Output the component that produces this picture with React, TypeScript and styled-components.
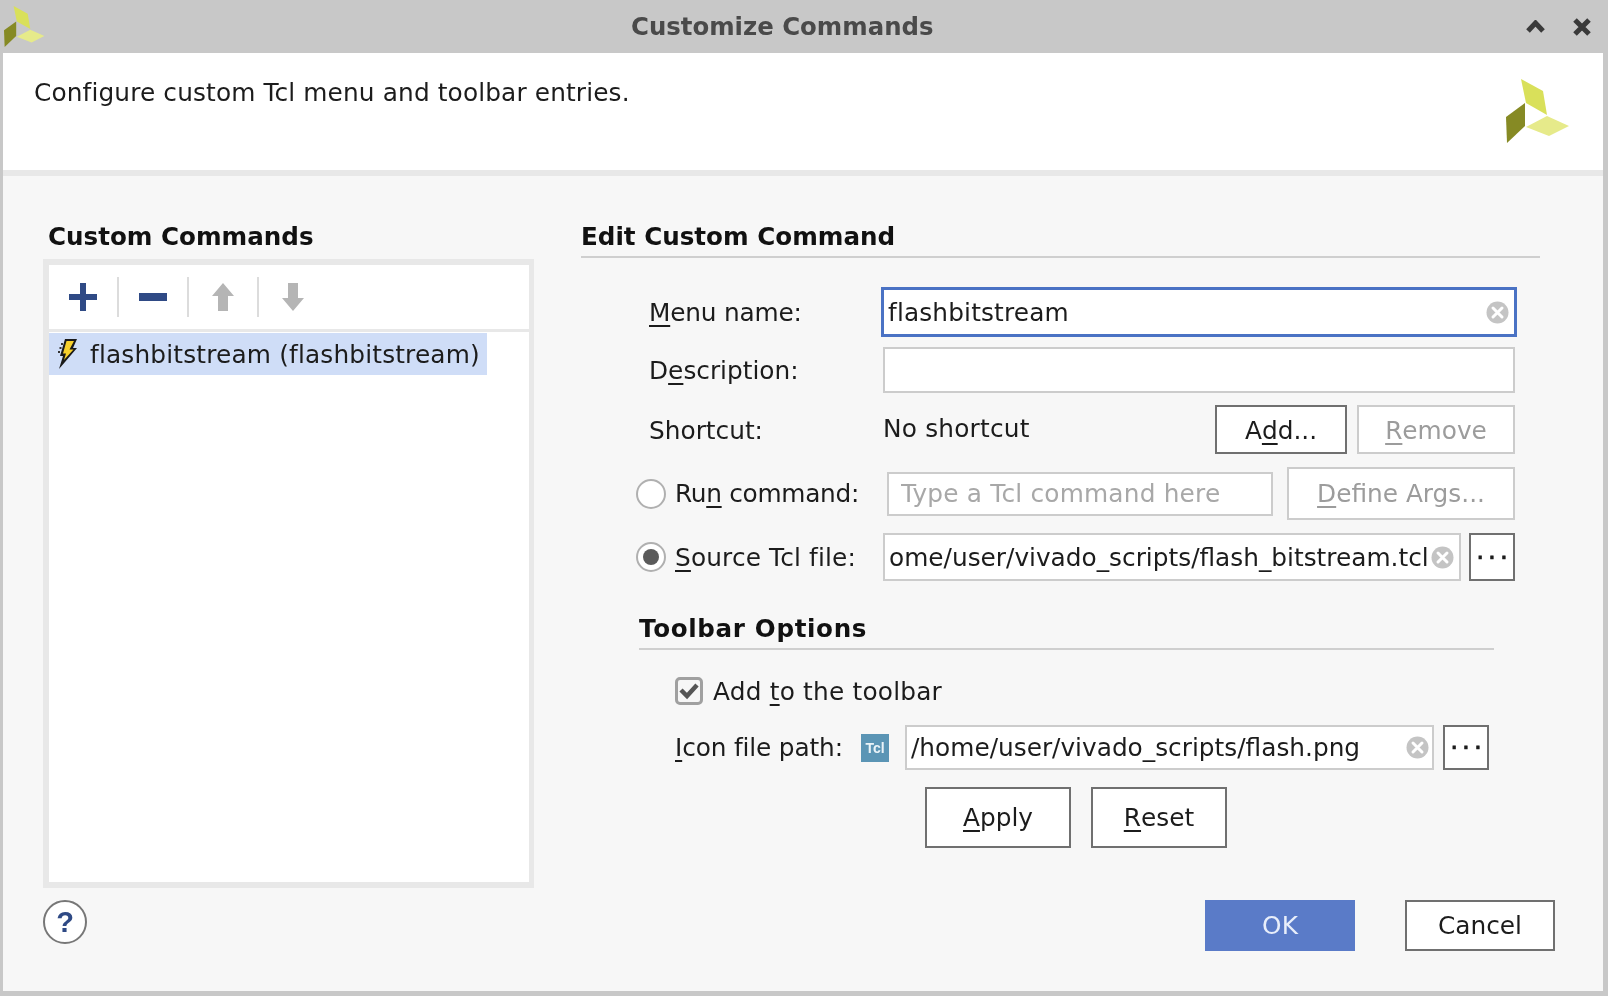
import styled, { createGlobalStyle } from "styled-components";

const GlobalStyle = createGlobalStyle`
  html, body {
    margin: 0;
    padding: 0;
    background: #c8c8c8;
  }
  * {
    box-sizing: border-box;
  }
`;

const Window = styled.div`
  width: 1608px;
  height: 996px;
  display: flex;
  flex-direction: column;
  background: #c8c8c8;
  color: #1c1c1c;
  font-family: "DejaVu Sans", sans-serif;
  font-size: 24.8px;
  overflow: hidden;
  filter: blur(0.45px);
`;

const TitleBar = styled.div`
  height: 53px;
  flex: none;
  display: flex;
  align-items: center;
  padding: 0 17px 0 4px;
`;

const TitleText = styled.div`
  margin-left: 586px;
  flex: 1;
  font-weight: bold;
  font-size: 24.4px;
  color: #4a4a4a;
`;

const TitleButtons = styled.div`
  display: flex;
  align-items: center;
  gap: 28px;
`;

const Content = styled.div`
  flex: 1;
  display: flex;
  flex-direction: column;
  margin: 0 5px 5px 3px;
  background: #f7f7f7;
`;

const Banner = styled.div`
  height: 123px;
  flex: none;
  display: flex;
  justify-content: space-between;
  background: #fff;
  border-bottom: 6px solid #e8e8e8;
  padding: 25px 33px 0 31px;
  letter-spacing: 0.13px;
`;

const BannerLogo = styled.div`
  margin-top: 1px;
`;

const Main = styled.div`
  height: 712px;
  flex: none;
  display: flex;
  gap: 47px;
  padding: 46px 0 0 40px;
`;

const LeftColumn = styled.div`
  width: 491px;
  display: flex;
  flex-direction: column;
`;

const RightColumn = styled.div`
  width: 959px;
  display: flex;
  flex-direction: column;
`;

const SectionTitle = styled.div<{ $track?: number }>`
  height: 28px;
  line-height: 30px;
  font-weight: bold;
  font-size: 24.6px;
  letter-spacing: ${(p) => p.$track ?? 0}px;
  color: #111;
  white-space: nowrap;
`;

const LeftTitle = styled(SectionTitle)`
  padding-left: 5px;
`;

const RuledTitle = styled.div`
  height: 36px;
  border-bottom: 2px solid #cfcfcf;
`;

const SubTitle = styled(RuledTitle)`
  width: 855px;
  margin: 33px 0 0 3px;
`;

const ListBox = styled.div`
  height: 629px;
  margin-top: 9px;
  background: #fff;
  border: 6px solid #e8e8e8;
  border-right-width: 5px;
`;

const ToolBar = styled.div`
  height: 67px;
  display: flex;
  align-items: center;
  border-bottom: 3px solid #e8e8e8;
  padding-bottom: 1px;
`;

const ToolCell = styled.div<{ $last?: boolean }>`
  width: ${(p) => (p.$last ? 67 : 70)}px;
  height: 40px;
  display: flex;
  align-items: center;
  justify-content: center;
  border-right: ${(p) => (p.$last ? "none" : "2px solid #dcdcdc")};
`;

const ListItem = styled.div`
  width: 438px;
  height: 42px;
  margin-top: 1px;
  display: flex;
  align-items: center;
  gap: 13px;
  padding-left: 9px;
  background: #cfddf7;
  white-space: nowrap;
  letter-spacing: 0.17px;
`;

const Form = styled.div`
  width: 879px;
  margin-left: 55px;
  display: flex;
  flex-direction: column;
`;

const Row = styled.div<{ $height: number; $top: number }>`
  height: ${(p) => p.$height}px;
  margin-top: ${(p) => p.$top}px;
  display: flex;
  align-items: center;
  white-space: nowrap;
`;

const Label = styled.div<{ $width: number; $track?: number }>`
  width: ${(p) => p.$width}px;
  flex: none;
  padding-left: 13px;
  letter-spacing: ${(p) => p.$track ?? 0}px;
`;

const ShortcutLabel = styled(Label)`
  padding-top: 1px;
`;

const RadioLabel = styled.div<{ $width: number; $track?: number }>`
  width: ${(p) => p.$width}px;
  flex: none;
  margin-left: 9px;
  letter-spacing: ${(p) => p.$track ?? 0}px;
`;

const Mnemonic = styled.span`
  text-decoration: underline;
  text-decoration-thickness: 2px;
  text-underline-offset: 4px;
`;

const Field = styled.div<{ $width?: number; $focused?: boolean; $height?: number }>`
  height: ${(p) => (p.$height ? `${p.$height}px` : "100%")};
  flex: ${(p) => (p.$width ? "none" : "1")};
  width: ${(p) => (p.$width ? `${p.$width}px` : "auto")};
  min-width: 0;
  display: flex;
  align-items: center;
  background: #fff;
  border: ${(p) => (p.$focused ? "3.5px solid #4a72c4" : "2px solid #cccccc")};
  margin: ${(p) => (p.$focused ? "0 -2px" : "0")};
`;

const TextInput = styled.input<{ $pad?: number; $track?: number }>`
  flex: 1;
  min-width: 0;
  height: 100%;
  border: none;
  outline: none;
  background: transparent;
  padding: 0 0 0 ${(p) => p.$pad ?? 4}px;
  font: inherit;
  letter-spacing: ${(p) => p.$track ?? 0}px;
  color: #1c1c1c;

  &::placeholder {
    color: #a8a8a8;
    opacity: 1;
  }
`;

const ClearSlot = styled.div<{ $right: number }>`
  flex: none;
  display: flex;
  margin: 0 ${(p) => p.$right}px 0 4px;
`;

const NoShortcut = styled.div`
  flex: 1;
  margin-top: -3px;
  letter-spacing: 0.2px;
`;

const PushButton = styled.div<{ $width: number; $disabled?: boolean; $left?: number }>`
  width: ${(p) => p.$width}px;
  height: 100%;
  flex: none;
  margin-left: ${(p) => p.$left ?? 0}px;
  display: flex;
  align-items: center;
  justify-content: center;
  background: #fff;
  border: 2px solid ${(p) => (p.$disabled ? "#cccccc" : "#707070")};
  color: ${(p) => (p.$disabled ? "#9c9c9c" : "#1c1c1c")};
`;

const ShortcutButton = styled(PushButton)`
  padding-top: 1px;
`;

const DotsButton = styled(PushButton)`
  letter-spacing: 4px;
  padding-left: 4px;
  -webkit-text-stroke: 0.7px #1c1c1c;
`;

const Radio = styled.div<{ $checked?: boolean }>`
  width: 30px;
  height: 30px;
  flex: none;
  display: flex;
  align-items: center;
  justify-content: center;
  border-radius: 50%;
  background: #fff;
  border: 2.5px solid #b0b0b0;

  &::after {
    content: "";
    display: ${(p) => (p.$checked ? "block" : "none")};
    width: 16px;
    height: 16px;
    border-radius: 50%;
    background: #5a5a5a;
  }
`;

const CheckBox = styled.div`
  width: 28px;
  height: 28px;
  flex: none;
  display: flex;
  align-items: center;
  justify-content: center;
  background: #f6f6f6;
  border: 3px solid #a0a0a0;
  border-radius: 5px;
`;

const IndentRow = styled(Row)`
  padding-left: 39px;
`;

const CheckLabel = styled.div`
  margin-left: 10px;
  letter-spacing: 0.2px;
`;

const IconLabel = styled.div`
  width: 186px;
  flex: none;
  letter-spacing: -0.15px;
`;

const TclBadge = styled.div`
  width: 28px;
  height: 28px;
  flex: none;
  margin-right: 16px;
  display: flex;
  align-items: center;
  justify-content: center;
  background: #5b95b5;
  color: #eaf3f8;
  font-family: "Liberation Sans", sans-serif;
  font-weight: bold;
  font-size: 14px;
`;

const ApplyRow = styled(Row)`
  margin-left: 289px;
  gap: 20px;
`;

const Footer = styled.div`
  height: 51px;
  margin-top: 12px;
  display: flex;
  padding: 0 48px 0 40px;
`;

const HelpButton = styled.div`
  width: 44px;
  height: 44px;
  display: flex;
  align-items: center;
  justify-content: center;
  border-radius: 50%;
  background: #fff;
  border: 2px solid #777;
  color: #2f4a85;
  font-family: "Liberation Sans", sans-serif;
  font-weight: bold;
  font-size: 29px;
`;

const FooterButtons = styled.div`
  margin-left: auto;
  display: flex;
  gap: 50px;
`;

const OkButton = styled.div`
  width: 150px;
  height: 100%;
  display: flex;
  align-items: center;
  justify-content: center;
  background: #5a7bc8;
  color: #e8eefa;
`;

const VivadoLogo = ({ size }: { size: number }) => (
  <svg width={size} height={size} viewBox="0 0 64 64">
    <polygon points="15,0 37,12 41,36 20,24" fill="#d9e05a" />
    <polygon points="19,24 19,47 1,64 0,38" fill="#868a24" />
    <polygon points="41,37 63,47 43,57 20,48" fill="#e6ea8a" />
  </svg>
);

const ClearIcon = () => (
  <svg width="23" height="23" viewBox="0 0 23 23">
    <circle cx="11.5" cy="11.5" r="11" fill="#c4c4c4" />
    <path d="M7 7 L16 16 M16 7 L7 16" stroke="#fff" strokeWidth="3" strokeLinecap="round" />
  </svg>
);

const PlusIcon = () => (
  <svg width="28" height="28" viewBox="0 0 28 28">
    <path d="M11 0h6v11h11v6H17v11h-6V17H0v-6h11z" fill="#2f4a85" />
  </svg>
);

const MinusIcon = () => (
  <svg width="28" height="28" viewBox="0 0 28 28">
    <rect x="0" y="10" width="28" height="8" fill="#2f4a85" />
  </svg>
);

const UpIcon = () => (
  <svg width="22" height="28" viewBox="0 0 22 28">
    <path d="M11 0 L22 13 H16 V28 H6 V13 H0 Z" fill="#b5b5b5" />
  </svg>
);

const DownIcon = () => (
  <svg width="22" height="28" viewBox="0 0 22 28">
    <path d="M6 0 H16 V15 H22 L11 28 L0 15 H6 Z" fill="#b5b5b5" />
  </svg>
);

const BoltIcon = () => (
  <svg width="19" height="30" viewBox="0 0 19 30">
    <path d="M7 0 H19 L15 9 H19 L1 30 L5 17 H2 Z" fill="#1a1a1a" />
    <path d="M8.5 2 H16 L11.5 10.5 H15.5 L6 21 L8 14.5 H5 Z" fill="#f7d02c" />
    <path d="M3 4 h2 v2 h-2 z M1.5 8 h2 v2 h-2 z M0 12 h2 v2 h-2 z" fill="#333" />
  </svg>
);

const CheckIcon = () => (
  <svg width="20" height="18" viewBox="0 0 20 18">
    <path d="M2 8 L8 14 L18 3" fill="none" stroke="#555" strokeWidth="4.5" />
  </svg>
);

const ChevronUpIcon = () => (
  <svg width="19" height="13" viewBox="0 0 19 13">
    <path d="M2 11 L9.5 3 L17 11" fill="none" stroke="#3a3a3a" strokeWidth="5" />
  </svg>
);

const CloseIcon = () => (
  <svg width="18" height="18" viewBox="0 0 18 18">
    <path d="M2 2 L16 16 M16 2 L2 16" stroke="#3a3a3a" strokeWidth="5" />
  </svg>
);

export default function App() {
  return (
    <>
      <GlobalStyle />
      <Window>
        <TitleBar>
          <VivadoLogo size={41} />
          <TitleText>Customize Commands</TitleText>
          <TitleButtons>
            <ChevronUpIcon />
            <CloseIcon />
          </TitleButtons>
        </TitleBar>
        <Content>
          <Banner>
            <div>Configure custom Tcl menu and toolbar entries.</div>
            <BannerLogo>
              <VivadoLogo size={64} />
            </BannerLogo>
          </Banner>
          <Main>
            <LeftColumn>
              <LeftTitle>Custom Commands</LeftTitle>
              <ListBox>
                <ToolBar>
                  <ToolCell><PlusIcon /></ToolCell>
                  <ToolCell><MinusIcon /></ToolCell>
                  <ToolCell><UpIcon /></ToolCell>
                  <ToolCell $last><DownIcon /></ToolCell>
                </ToolBar>
                <ListItem>
                  <BoltIcon />
                  flashbitstream (flashbitstream)
                </ListItem>
              </ListBox>
            </LeftColumn>
            <RightColumn>
              <RuledTitle>
                <SectionTitle>Edit Custom Command</SectionTitle>
              </RuledTitle>
              <Form>
                <Row $height={50} $top={29}>
                  <Label $width={247} $track={-0.2}><Mnemonic>M</Mnemonic>enu name:</Label>
                  <Field $focused>
                    <TextInput readOnly value="flashbitstream" $track={0.15} />
                    <ClearSlot $right={5}><ClearIcon /></ClearSlot>
                  </Field>
                </Row>
                <Row $height={46} $top={10}>
                  <Label $width={247}>D<Mnemonic>e</Mnemonic>scription:</Label>
                  <Field>
                    <TextInput readOnly value="" />
                  </Field>
                </Row>
                <Row $height={49} $top={12}>
                  <ShortcutLabel $width={247}>Shortcut:</ShortcutLabel>
                  <NoShortcut>No shortcut</NoShortcut>
                  <ShortcutButton $width={132}>A<Mnemonic>d</Mnemonic>d...</ShortcutButton>
                  <ShortcutButton $width={158} $disabled $left={10}>
                    <Mnemonic>R</Mnemonic>emove
                  </ShortcutButton>
                </Row>
                <Row $height={53} $top={13}>
                  <Radio />
                  <RadioLabel $width={212} $track={-0.3}>Ru<Mnemonic>n</Mnemonic> command:</RadioLabel>
                  <Field $width={386} $height={44}>
                    <TextInput readOnly placeholder="Type a Tcl command here" $pad={12} $track={0.2} />
                  </Field>
                  <PushButton $width={228} $disabled $left={14}>
                    <Mnemonic>D</Mnemonic>efine Args...
                  </PushButton>
                </Row>
                <Row $height={48} $top={13}>
                  <Radio $checked />
                  <RadioLabel $width={208} $track={0.15}><Mnemonic>S</Mnemonic>ource Tcl file:</RadioLabel>
                  <Field $width={578}>
                    <TextInput readOnly value="ome/user/vivado_scripts/flash_bitstream.tcl" />
                    <ClearSlot $right={5}><ClearIcon /></ClearSlot>
                  </Field>
                  <DotsButton $width={46} $left={8}>···</DotsButton>
                </Row>
                <SubTitle>
                  <SectionTitle $track={0.65}>Toolbar Options</SectionTitle>
                </SubTitle>
                <IndentRow $height={28} $top={27}>
                  <CheckBox><CheckIcon /></CheckBox>
                  <CheckLabel>Add <Mnemonic>t</Mnemonic>o the toolbar</CheckLabel>
                </IndentRow>
                <IndentRow $height={45} $top={20}>
                  <IconLabel><Mnemonic>I</Mnemonic>con file path:</IconLabel>
                  <TclBadge>Tcl</TclBadge>
                  <Field $width={529}>
                    <TextInput readOnly value="/home/user/vivado_scripts/flash.png" />
                    <ClearSlot $right={3}><ClearIcon /></ClearSlot>
                  </Field>
                  <DotsButton $width={46} $left={9}>···</DotsButton>
                </IndentRow>
                <ApplyRow $height={61} $top={17}>
                  <PushButton $width={146}><Mnemonic>A</Mnemonic>pply</PushButton>
                  <PushButton $width={136}><Mnemonic>R</Mnemonic>eset</PushButton>
                </ApplyRow>
              </Form>
            </RightColumn>
          </Main>
          <Footer>
            <HelpButton>?</HelpButton>
            <FooterButtons>
              <OkButton>OK</OkButton>
              <PushButton $width={150}>Cancel</PushButton>
            </FooterButtons>
          </Footer>
        </Content>
      </Window>
    </>
  );
}
